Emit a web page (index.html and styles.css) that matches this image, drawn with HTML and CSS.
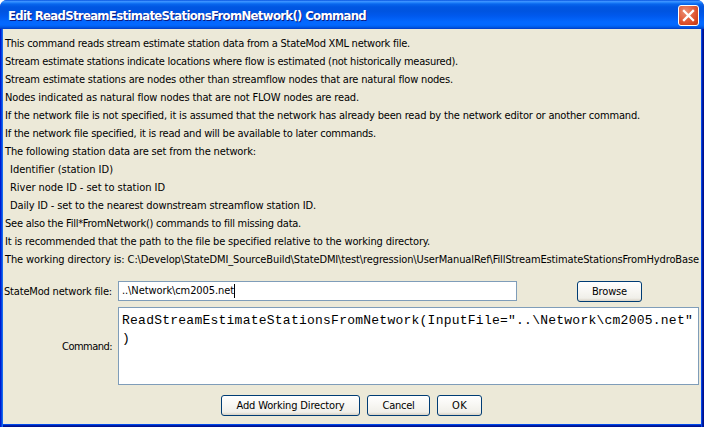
FILE: index.html
```html
<!DOCTYPE html>
<html lang="en">
<head>
<meta charset="utf-8">
<title>Edit ReadStreamEstimateStationsFromNetwork() Command</title>
<link rel="stylesheet" href="styles.css">
</head>
<body>
<div class="window">
  <header class="titlebar">
    <h1 class="title"><span data-width="358">Edit ReadStreamEstimateStationsFromNetwork() Command</span></h1>
    <button class="close" aria-label="Close"><svg width="21" height="21" viewBox="0 0 21 21"><path d="M6 6L15 15M15 6L6 15" stroke="#fff" stroke-width="2.3" stroke-linecap="square"/></svg></button>
  </header>
  <main class="content">
    <div class="notes">
      <p><span data-width="405">This command reads stream estimate station data from a StateMod XML network file.</span></p>
      <p><span data-width="453">Stream estimate stations indicate locations where flow is estimated (not historically measured).</span></p>
      <p><span data-width="448">Stream estimate stations are nodes other than streamflow nodes that are natural flow nodes.</span></p>
      <p><span data-width="354">Nodes indicated as natural flow nodes that are not FLOW nodes are read.</span></p>
      <p><span data-width="635">If the network file is not specified, it is assumed that the network has already been read by the network editor or another command.</span></p>
      <p><span data-width="371">If the network file specified, it is read and will be available to later commands.</span></p>
      <p><span data-width="251">The following station data are set from the network:</span></p>
      <p class="indent"><span data-width="103">Identifier (station ID)</span></p>
      <p class="indent"><span data-width="155">River node ID - set to station ID</span></p>
      <p class="indent"><span data-width="306">Daily ID - set to the nearest downstream streamflow station ID.</span></p>
      <p><span data-width="296">See also the Fill*FromNetwork() commands to fill missing data.</span></p>
      <p><span data-width="425">It is recommended that the path to the file be specified relative to the working directory.</span></p>
      <p><span data-width="694">The working directory is: C:\Develop\StateDMI_SourceBuild\StateDMI\test\regression\UserManualRef\FillStreamEstimateStationsFromHydroBase</span></p>
    </div>
    <div class="form">
      <label class="label"><span data-width="108">StateMod network file:</span></label>
      <div class="file-row">
        <div class="field"><span data-width="112">..\Network\cm2005.net</span><i class="caret"></i></div>
        <button class="button browse"><span data-width="35">Browse</span></button>
      </div>
      <label class="label command-label"><span data-width="50">Command:</span></label>
      <div class="command"><span data-width="571">ReadStreamEstimateStationsFromNetwork(InputFile="..\Network\cm2005.net"</span><br>)</div>
    </div>
    <div class="actions">
      <button class="button add"><span data-width="108">Add Working Directory</span></button>
      <button class="button cancel"><span data-width="32">Cancel</span></button>
      <button class="button ok"><span data-width="15">OK</span></button>
    </div>
  </main>
</div>
<script src="fit.js"></script>
</body>
</html>
```
FILE: styles.css
```css
* { box-sizing: border-box; }
body {
  margin: 0;
  width: 704px;
  height: 427px;
  overflow: hidden;
  background: #fff;
  font: 11px/18px "DejaVu Sans Condensed", "DejaVu Sans", sans-serif;
  font-stretch: condensed;
  color: #000;
}
.window {
  display: flex;
  flex-direction: column;
  width: 704px;
  height: 427px;
  border-radius: 7px 7px 0 0;
  overflow: hidden;
  background: linear-gradient(90deg, #0019cf 0 1px, #0441e0 1px 2px, #166aee 2px 3px, transparent 3px 701px, #0148e8 701px 702px, #001dab 702px 703px, #00138c 703px), #0855dd;
}
[data-width] { display: inline-block; white-space: pre; }
.titlebar {
  display: flex;
  justify-content: space-between;
  height: 29px;
  flex: none;
  padding: 5px 5px 0 8px;
  background: linear-gradient(180deg, #0753df 0, #3b91ff 1.5px, #2585fb 2.5px, #0866ed 4px, #0056e2 7px, #0054e0 11px, #0059ee 16px, #0368ff 22px, #0368ff 25px, #005be8 27px, #003bc5 29px);
}
.title {
  margin: 1px 0 0;
  font: bold 13px/20px "DejaVu Sans Condensed", "DejaVu Sans", sans-serif;
  font-stretch: condensed;
  color: #fff;
  text-shadow: 1px 1px 0 #0c1a80;
}
.close {
  width: 21px;
  height: 21px;
  padding: 0;
  border: 1px solid #fff;
  border-radius: 3px;
  background: radial-gradient(circle at 35% 30%, #ec9075 0, #e2603e 45%, #d54621 75%, #b73612 100%);
}
.close svg { display: block; margin: -1px; fill: none; }
.content {
  display: flex;
  flex-direction: column;
  height: 395px;
  margin: 0 3px;
  background: #ece9d8;
  box-shadow: 0 1px #0148e8, 0 2px #001dab, 0 3px #00138c;
}
.notes { padding: 6px 0 0 2px; }
.notes p { height: 18px; margin: 0; white-space: nowrap; }
.notes .indent { padding-left: 5px; }
.form {
  display: grid;
  grid-template-columns: 109px 581px;
  grid-template-rows: 21px 78px;
  column-gap: 6px;
  row-gap: 5px;
  margin: 12px 0 0;
}
.label { align-self: center; text-align: right; white-space: nowrap; }
.command-label { padding-top: 2px; }
.file-row { display: flex; align-items: flex-start; }
.field {
  display: flex;
  align-items: center;
  width: 399px;
  height: 20px;
  padding-left: 3px;
  border: 1px solid #7f9db9;
  background: #fff;
}
.caret { width: 1px; height: 14px; background: #000; }
.button {
  height: 21px;
  padding: 0;
  border: 1px solid #003c74;
  border-radius: 3px;
  background: linear-gradient(#fff 0, #f7f6f2 50%, #f0efe9 85%, #d8d2c5 100%);
  font: inherit;
  line-height: 18px;
  color: #000;
}
.browse { width: 65px; margin-left: 60px; }
.command {
  height: 78px;
  padding: 4px 3px;
  border: 1px solid #7f9db9;
  background: #fff;
  font: 13px/18px "Liberation Mono", monospace;
}
.actions { display: flex; gap: 7px; margin: 10px 0 0 218px; }
.add { width: 139px; }
.cancel { width: 63px; }
.ok { width: 45px; }
```
FILE: fit.js
```js
// Track each line of text so that it fills its own measure.
document.querySelectorAll("[data-width]").forEach(function (el) {
  var natural = el.getBoundingClientRect().width;
  var spacing = (Number(el.dataset.width) - natural) / el.textContent.length;
  el.style.letterSpacing = spacing.toFixed(4) + "px";
});
```
